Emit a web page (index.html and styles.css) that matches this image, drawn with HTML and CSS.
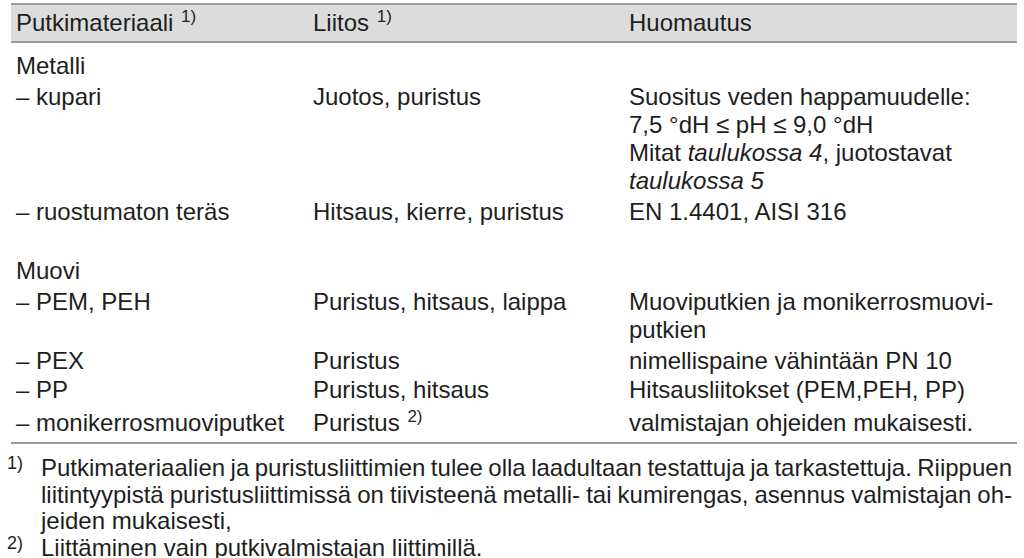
FILE: index.html
```html
<!DOCTYPE html>
<html lang="fi">
<head>
<meta charset="utf-8">
<title>Putkimateriaalit</title>
<link rel="stylesheet" href="styles.css">
</head>
<body>
<div class="page">
  <div class="table">
    <div class="row head">
      <div class="cell">Putkimateriaali <span class="sup">1)</span></div>
      <div class="cell">Liitos <span class="sup">1)</span></div>
      <div class="cell">Huomautus</div>
    </div>
    <div class="body">
      <div class="row first">
        <div class="cell">Metalli</div>
        <div class="cell"></div>
        <div class="cell"></div>
      </div>
      <div class="row">
        <div class="cell">– kupari</div>
        <div class="cell">Juotos, puristus</div>
        <div class="cell">Suositus veden happamuudelle:<br>7,5 °dH ≤ pH ≤ 9,0 °dH<br>Mitat <i>taulukossa 4</i>, juotostavat<br><i>taulukossa 5</i></div>
      </div>
      <div class="row">
        <div class="cell">– ruostumaton teräs</div>
        <div class="cell">Hitsaus, kierre, puristus</div>
        <div class="cell">EN 1.4401, AISI 316</div>
      </div>
      <div class="row spacer">
        <div class="cell">Muovi</div>
        <div class="cell"></div>
        <div class="cell"></div>
      </div>
      <div class="row">
        <div class="cell">– PEM, PEH</div>
        <div class="cell">Puristus, hitsaus, laippa</div>
        <div class="cell">Muoviputkien ja monikerrosmuovi-<br>putkien</div>
      </div>
      <div class="row">
        <div class="cell">– PEX</div>
        <div class="cell">Puristus</div>
        <div class="cell">nimellispaine vähintään PN 10</div>
      </div>
      <div class="row tight">
        <div class="cell">– PP</div>
        <div class="cell">Puristus, hitsaus</div>
        <div class="cell">Hitsausliitokset (PEM,PEH, PP)</div>
      </div>
      <div class="row last">
        <div class="cell">– monikerrosmuoviputket</div>
        <div class="cell">Puristus <span class="sup">2)</span></div>
        <div class="cell">valmistajan ohjeiden mukaisesti.</div>
      </div>
    </div>
  </div>
  <div class="notes">
    <div class="note">
      <span class="mark">1)</span>
      <div class="note-text">
        <span class="jline">Putkimateriaalien ja puristusliittimien tulee olla laadultaan testattuja ja tarkastettuja. Riippuen</span>
        <span class="jline">liitintyypistä puristusliittimissä on tiivisteenä metalli- tai kumirengas, asennus valmistajan oh-</span>
        <span class="line">jeiden mukaisesti,</span>
      </div>
    </div>
    <div class="note">
      <span class="mark">2)</span>
      <div class="note-text">
        <span class="line">Liittäminen vain putkivalmistajan liittimillä.</span>
      </div>
    </div>
  </div>
</div>
</body>
</html>
```

FILE: styles.css
```css
html, body {
  margin: 0;
  padding: 0;
  background: #ffffff;
}

body {
  font-family: "Liberation Sans", Arial, sans-serif;
  font-size: 24px;
  color: #1e1e1e;
}

.page {
  width: 1024px;
  padding-top: 3px;
}

.table {
  margin-left: 11px;
  width: 1006px;
  border-top: 2px solid #9c9c9c;
  border-bottom: 2px solid #9c9c9c;
}

.row {
  display: grid;
  grid-template-columns: 297px 316px 1fr;
  line-height: 28px;
  padding-top: 3px;
}

.row.tight {
  padding-top: 1px;
}

.row.last {
  padding-top: 5px;
}

.cell {
  padding-left: 5px;
}

.head {
  background: #dcdcdc;
  border-bottom: 2px solid #9c9c9c;
  line-height: 27px;
  padding-top: 4px;
  padding-bottom: 5px;
}

.body {
  padding-top: 6px;
  padding-bottom: 5px;
}

.row.spacer {
  padding-top: 31px;
}

.sup {
  font-size: 17px;
  line-height: 0;
  vertical-align: 9px;
  margin-left: 1px;
}

.notes {
  padding-top: 11px;
  margin-left: 7px;
  width: 1005px;
}

.note {
  display: flex;
  line-height: 26.7px;
}

.mark {
  width: 34px;
  flex: none;
  font-size: 18px;
  position: relative;
  top: -5px;
}

.note-text {
  flex: 1;
}

.jline {
  display: block;
  text-align: justify;
  text-align-last: justify;
  word-spacing: -3px;
  white-space: nowrap;
}

.line {
  display: block;
}
```
